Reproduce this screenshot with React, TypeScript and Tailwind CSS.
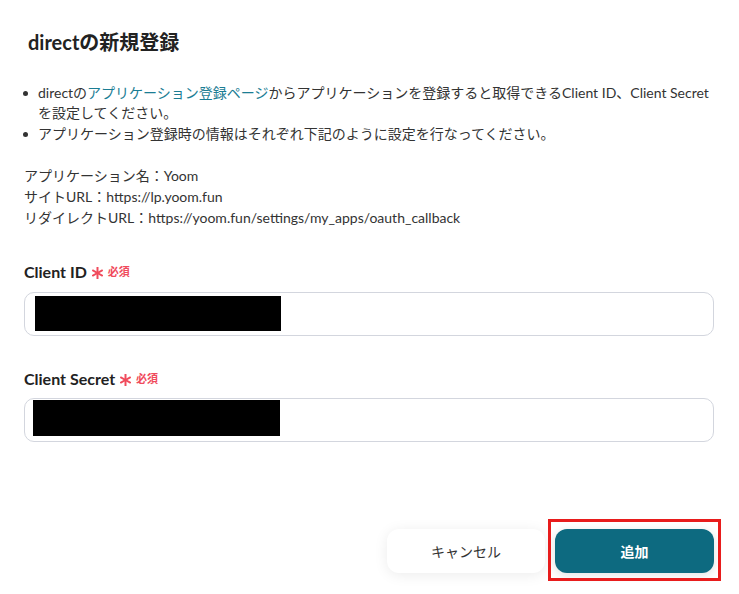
import React from "react";

const Required = () => (
  <span className="ml-[5px] inline-flex items-center gap-[5px] text-[#f04b5c]">
    <svg width="11" height="12" viewBox="0 0 11 12" className="relative top-[1px]">
      <g stroke="currentColor" strokeWidth="2" strokeLinecap="butt">
        <line x1="5.5" y1="0" x2="5.5" y2="12" />
        <line x1="0.3" y1="3" x2="10.7" y2="9" />
        <line x1="0.3" y1="9" x2="10.7" y2="3" />
      </g>
    </svg>
    <span className="text-[11px] font-bold">必須</span>
  </span>
);

const MaskedInput = ({ maskClass }: { maskClass: string }) => (
  <div className="relative h-[44px] w-full rounded-[10px] border border-[#d3d6de] bg-white">
    <div className={`absolute bg-black ${maskClass}`} />
  </div>
);

const Bullet = () => (
  <span className="w-[14px] shrink-0 flex justify-start pt-[8px]">
    <span className="block h-[5px] w-[5px] rounded-full bg-[#333] -ml-[1px]" />
  </span>
);

export default function App() {
  return (
    <div
      className="w-[739px] h-[594px] bg-white text-[#333] pl-6 pr-[25px] flex flex-col"
      style={{ fontFamily: 'Lato, "Noto Sans CJK JP", sans-serif' }}
    >
      <h1 className="pt-7 pl-1 text-[20px] leading-[28px] font-bold text-[#222]">
        directの新規登録
      </h1>

      <ul className="mt-[27px] text-[14px] leading-[20px]">
        <li className="flex">
          <Bullet />
          <span>
            directの
            <span className="text-[#1b7d94]">アプリケーション登録ページ</span>
            からアプリケーションを登録すると取得できるClient ID、Client&nbsp;Secret
            <br />
            を設定してください。
          </span>
        </li>
        <li className="flex mt-[1px]">
          <Bullet />
          <span>アプリケーション登録時の情報はそれぞれ下記のように設定を行なってください。</span>
        </li>
      </ul>

      <div className="mt-[21px] text-[14px] leading-[21px]">
        <p>アプリケーション名：Yoom</p>
        <p>サイトURL：https://lp.yoom.fun</p>
        <p>リダイレクトURL：https://yoom.fun/settings/my_apps/oauth_callback</p>
      </div>

      <div className="mt-[33px]">
        <label className="flex items-center text-[16px] leading-[22px] font-bold text-[#222]">
          Client ID
          <Required />
        </label>
        <div className="mt-[9px]">
          <MaskedInput maskClass="left-[10px] top-[3px] w-[246px] h-[35px]" />
        </div>
      </div>

      <div className="mt-[32px]">
        <label className="flex items-center text-[16px] leading-[22px] font-bold text-[#222]">
          Client Secret
          <Required />
        </label>
        <div className="mt-[8px]">
          <MaskedInput maskClass="left-[8px] top-[1px] w-[247px] h-[36px]" />
        </div>
      </div>

      <div className="mt-[87px] flex justify-end gap-[10px]">
        <button className="h-[44px] w-[158px] rounded-[12px] bg-white text-[14px] text-[#333] shadow-[0_2px_14px_rgba(0,0,0,0.08)]">
          キャンセル
        </button>
        <div className="relative">
          <button className="h-[44px] w-[159px] rounded-[12px] bg-[#0d6a80] text-[14px] font-bold text-white shadow-[0_2px_10px_rgba(0,0,0,0.12)]">
            追加
          </button>
          <div className="pointer-events-none absolute -left-[7px] -top-[10px] -right-[7px] -bottom-[8px] border-[3px] border-[#e81c1c]" />
        </div>
      </div>
    </div>
  );
}
